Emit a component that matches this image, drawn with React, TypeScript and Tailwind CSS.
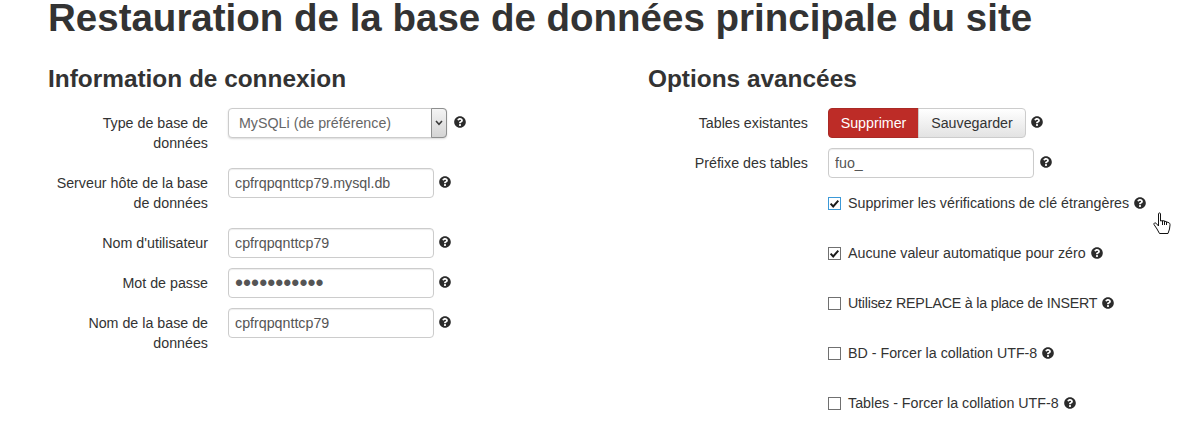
import { FaQuestionCircle } from "react-icons/fa";

const inputClass =
    "block h-[30px] w-[206px] rounded border border-[#cccccc] bg-white px-[6px] text-[14.25px] leading-5 text-[#555555] shadow-[inset_0_1px_1px_rgba(0,0,0,0.075)] outline-none";

function Help({ className = "" }: { className?: string }) {
    return <FaQuestionCircle className={`h-3 w-3 shrink-0 text-[#2b2b2b] ${className}`} />;
}

function Row({ label, children, className = "" }: { label: string; children: React.ReactNode; className?: string }) {
    return (
        <div className={`flex items-start ${className}`}>
            <label className="w-[160px] shrink-0 pt-[5px] text-right text-[14.25px] leading-5 text-[#333333]">{label}</label>
            <div className="ml-5 flex items-start">{children}</div>
        </div>
    );
}

function Check({
    label,
    checked = false,
    focus = false,
    textClass = "",
}: {
    label: string;
    checked?: boolean;
    focus?: boolean;
    textClass?: string;
}) {
    return (
        <label className="flex h-5 items-center text-[14.25px] whitespace-nowrap text-[#333333]">
            <span className="relative mr-[7px] flex h-[13px] w-[13px] shrink-0">
                <input
                    type="checkbox"
                    defaultChecked={checked}
                    className={`h-[13px] w-[13px] appearance-none border bg-white ${focus ? "border-[#3b99d8]" : "border-[#707070]"}`}
                />
                {checked && (
                    <svg viewBox="0 0 13 13" className="pointer-events-none absolute inset-0 h-[13px] w-[13px]">
                        <path d="M2.6 6.6 L5.2 9.4 L10.3 3.6" fill="none" stroke="#1a1a1a" strokeWidth="2" />
                    </svg>
                )}
            </span>
            <span className={`pt-px ${textClass}`}>{label}</span>
            <Help className="ml-[5px] -mt-[1px]" />
        </label>
    );
}

export default function App() {
    return (
        <div className="relative h-[423px] w-[1180px] overflow-hidden bg-white px-12 font-['Liberation_Sans',Arial,sans-serif]">
            <h1 className="text-[38.5px] leading-[36px] font-bold whitespace-nowrap text-[#333333]">
                Restauration de la base de données principale du site
            </h1>

            <div className="mt-[30px] flex">
                <div className="w-[600px]">
                    <h3 className="text-[24.4px] leading-[26px] font-bold text-[#333333]">Information de connexion</h3>

                    <div className="mt-[16px] flex flex-col gap-[10px]">
                        <Row label="Type de base de données" className="h-[50px]">
                            <div className="relative">
                                <select className="block h-[30px] w-[219px] appearance-none rounded border border-[#cccccc] bg-white pt-[2px] pl-[10px] text-[14.25px] text-[#666666] shadow-[0_1px_2px_rgba(0,0,0,0.15)] outline-none">
                                    <option>MySQLi (de préférence)</option>
                                </select>
                                <span className="pointer-events-none absolute top-0 right-0 flex h-[30px] w-4 items-center justify-center rounded-r border border-[#8e8f8f] bg-gradient-to-b from-[#f4f4f4] to-[#d4d4d4]">
                                    <svg viewBox="0 0 8 6" className="h-[6px] w-2">
                                        <path d="M1 1 L4 4.3 L7 1" fill="none" stroke="#3a3a3a" strokeWidth="1.6" />
                                    </svg>
                                </span>
                            </div>
                            <Help className="mt-2 ml-[7px]" />
                        </Row>
                        <Row label="Serveur hôte de la base de données" className="h-[50px]">
                            <input className={inputClass} defaultValue="cpfrqpqnttcp79.mysql.db" />
                            <Help className="mt-2 ml-[5px]" />
                        </Row>
                        <Row label="Nom d'utilisateur">
                            <input className={inputClass} defaultValue="cpfrqpqnttcp79" />
                            <Help className="mt-2 ml-[5px]" />
                        </Row>
                        <Row label="Mot de passe">
                            <input
                                type="password"
                                className="block h-[30px] w-[206px] rounded border border-[#cccccc] bg-white px-[6px] text-[23px] leading-5 text-[#555555] shadow-[inset_0_1px_1px_rgba(0,0,0,0.075)] outline-none"
                                defaultValue="cpfrqpqnttc"
                            />
                            <Help className="mt-2 ml-[5px]" />
                        </Row>
                        <Row label="Nom de la base de données" className="h-[50px]">
                            <input className={inputClass} defaultValue="cpfrqpqnttcp79" />
                            <Help className="mt-2 ml-[5px]" />
                        </Row>
                    </div>
                </div>

                <div className="w-[484px]">
                    <h3 className="text-[24.4px] leading-[26px] font-bold text-[#333333]">Options avancées</h3>

                    <div className="mt-[16px] flex flex-col gap-[10px]">
                        <Row label="Tables existantes">
                            <div className="flex h-[30px] text-[14.25px]">
                                <button className="h-[30px] w-[91px] rounded-l border border-[#a92a25] bg-[#bd2c27] pt-px text-white">
                                    Supprimer
                                </button>
                                <button className="-ml-px h-[30px] w-[108px] rounded-r border border-[#cccccc] bg-gradient-to-b from-white to-[#e3e3e3] pt-px text-[#333333]">
                                    Sauvegarder
                                </button>
                            </div>
                            <Help className="mt-2 ml-[5px]" />
                        </Row>
                        <Row label="Préfixe des tables">
                            <input className={inputClass} defaultValue="fuo_" />
                            <Help className="mt-2 ml-[6px]" />
                        </Row>
                    </div>

                    <div className="mt-[15px] ml-[180px] flex flex-col gap-[30px]">
                        <Check label="Supprimer les vérifications de clé étrangères" checked focus />
                        <Check label="Aucune valeur automatique pour zéro" checked />
                        <Check label="Utilisez REPLACE à la place de INSERT" textClass="tracking-[-0.21px]" />
                        <Check label="BD - Forcer la collation UTF-8" />
                        <Check label="Tables - Forcer la collation UTF-8" />
                    </div>
                </div>
            </div>

            {/* curseur de la souris */}
            <svg viewBox="0 0 18 23" className="absolute top-[212px] left-[1153px] h-[23px] w-[18px]">
                <path
                    d="M5.5 1.8 C5.5 .6 7.5 .6 7.5 1.8 L7.5 9 L9.5 8.6 L11.5 9 L13.5 9.8 L16 10.8 C17 11.4 17 12 17 13 L16.5 17 L15 21.5 L6.5 21.5 L4 17 L1 12.5 C.6 11 2 10.4 3 11.2 L5.5 14 Z"
                    fill="#ffffff"
                    stroke="#111111"
                    strokeWidth="1"
                    strokeLinejoin="round"
                />
                <path d="M9.5 8.6 L9.5 13 M11.5 9 L11.5 13 M13.5 9.8 L13.5 13" fill="none" stroke="#111111" strokeWidth="1" />
            </svg>
        </div>
    );
}
